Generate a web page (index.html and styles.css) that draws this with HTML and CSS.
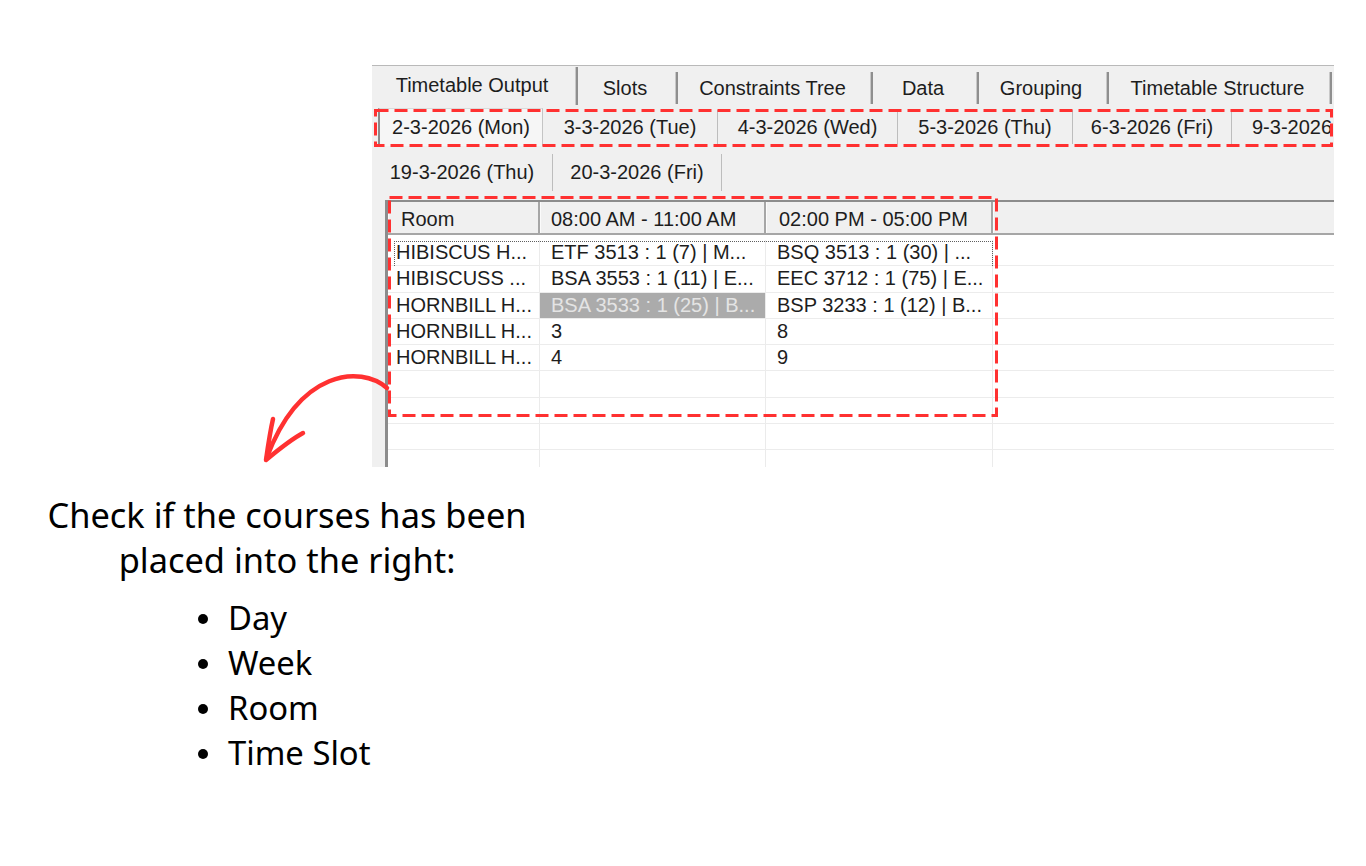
FILE: index.html
```html
<!DOCTYPE html>
<html lang="en">
<head>
<meta charset="utf-8">
<title>Timetable check</title>
<link rel="stylesheet" href="styles.css">
</head>
<body>
<div class="page">
  <div class="shot-col">
    <section class="window">
      <nav class="main-tabs">
        <div class="mtab active w-out">Timetable Output</div>
        <div class="mtab w-slots">Slots</div>
        <div class="mtab w-ctree">Constraints Tree</div>
        <div class="mtab w-data">Data</div>
        <div class="mtab w-group">Grouping</div>
        <div class="mtab w-struct">Timetable Structure</div>
      </nav>

      <div class="date-row row-a">
        <div class="dtab current w165">2-3-2026 (Mon)</div>
        <div class="dtab w175">3-3-2026 (Tue)</div>
        <div class="dtab w180">4-3-2026 (Wed)</div>
        <div class="dtab w175">5-3-2026 (Thu)</div>
        <div class="dtab w159">6-3-2026 (Fri)</div>
        <div class="dtab last">9-3-2026</div>
      </div>
      <div class="date-row row-b">
        <div class="dtab w181">19-3-2026 (Thu)</div>
        <div class="dtab w169">20-3-2026 (Fri)</div>
      </div>

      <div class="grid">
        <div class="grid-head">
          <div class="hcell">Room</div>
          <div class="hcell">08:00 AM - 11:00 AM</div>
          <div class="hcell">02:00 PM - 05:00 PM</div>
          <div class="hcell fill"></div>
        </div>
        <div class="grid-gap"></div>
        <div class="grow focus">
          <div class="cell room">HIBISCUS H...</div>
          <div class="cell">ETF 3513 : 1 (7) | M...</div>
          <div class="cell">BSQ 3513 : 1 (30) | ...</div>
          <div class="cell fill"></div>
        </div>
        <div class="grow">
          <div class="cell room">HIBISCUSS ...</div>
          <div class="cell">BSA 3553 : 1 (11) | E...</div>
          <div class="cell">EEC 3712 : 1 (75) | E...</div>
          <div class="cell fill"></div>
        </div>
        <div class="grow">
          <div class="cell room">HORNBILL H...</div>
          <div class="cell picked">BSA 3533 : 1 (25) | B...</div>
          <div class="cell">BSP 3233 : 1 (12) | B...</div>
          <div class="cell fill"></div>
        </div>
        <div class="grow">
          <div class="cell room">HORNBILL H...</div>
          <div class="cell">3</div>
          <div class="cell">8</div>
          <div class="cell fill"></div>
        </div>
        <div class="grow">
          <div class="cell room">HORNBILL H...</div>
          <div class="cell">4</div>
          <div class="cell">9</div>
          <div class="cell fill"></div>
        </div>
        <div class="grow"><div class="cell room"></div><div class="cell"></div><div class="cell"></div><div class="cell fill"></div></div>
        <div class="grow"><div class="cell room"></div><div class="cell"></div><div class="cell"></div><div class="cell fill"></div></div>
        <div class="grow"><div class="cell room"></div><div class="cell"></div><div class="cell"></div><div class="cell fill"></div></div>
        <div class="grow"><div class="cell room"></div><div class="cell"></div><div class="cell"></div><div class="cell fill"></div></div>
      </div>
    </section>
  </div>

  <section class="note">
    <p class="note-text">Check if the courses has been<br>placed into the right:</p>
    <ul class="checks">
      <li>Day</li>
      <li>Week</li>
      <li>Room</li>
      <li>Time Slot</li>
    </ul>
  </section>

  <svg class="marks" width="1366" height="866" viewBox="0 0 1366 866" aria-hidden="true">
    <g fill="none" stroke="#ff3131" stroke-width="3" stroke-dasharray="13 6">
      <rect x="375.5" y="110.5" width="956" height="35"/>
      <rect x="389.5" y="197.5" width="607" height="218"/>
    </g>
    <g fill="none" stroke="#ff3131" stroke-width="4.5" stroke-linecap="round" stroke-linejoin="round">
      <path d="M387 388 C360 365 300 370 267 457"/>
      <path d="M273 419 C270 432 268 446 266 460 C278 450 290 440 303 433"/>
    </g>
  </svg>
</div>
</body>
</html>
```

FILE: styles.css
```css
html, body {
  margin: 0;
  background: #ffffff;
}

.page {
  position: relative;
  width: 1366px;
  height: 866px;
  overflow: hidden;
}

/* ---------- application window ---------- */
.shot-col {
  padding: 65px 0 0 372px;
}

.window {
  width: 962px;
  height: 402px;
  box-sizing: border-box;
  background: #f0f0f0;
  border-top: 1px solid #b9b9b9;
  overflow: hidden;
  display: flex;
  flex-direction: column;
  font-family: "Liberation Sans", Arial, sans-serif;
  font-size: 20px;
  color: #1d1d1d;
}

/* main tab strip */
.main-tabs {
  display: flex;
  height: 39px;
  flex: none;
}

.mtab {
  position: relative;
  box-sizing: border-box;
  height: 100%;
  display: flex;
  align-items: center;
  justify-content: center;
  padding-top: 5px;
  padding-right: 6px;
  white-space: nowrap;
}

.mtab::after {
  content: "";
  position: absolute;
  right: 0;
  top: 6px;
  bottom: 1px;
  width: 2px;
  background: #8f8f8f;
  box-shadow: -1px 0 0 #c8c8c8;
}

.mtab.active {
  padding-top: 0;
  padding-bottom: 1px;
}

.mtab.active::after {
  top: 1px;
  bottom: 0;
}

.w-out { width: 206px; }
.w-slots { width: 100px; }
.w-ctree { width: 195px; }
.w-data { width: 106px; }
.w-group { width: 130px; }
.w-struct { width: 223px; }

/* date tab rows */
.date-row {
  display: flex;
  flex: none;
  white-space: nowrap;
}

.row-a {
  height: 38px;
  margin-top: 3px;
  padding-left: 6px;
}

.row-b {
  height: 42px;
  margin-top: 5px;
}

.dtab {
  flex: none;
  box-sizing: border-box;
  display: flex;
  align-items: center;
  justify-content: center;
  border-right: 1px solid #bdbdbd;
  margin: 2px 0;
  overflow: hidden;
}

.row-b .dtab {
  margin: 3px 0 2px;
}

.dtab.current {
  margin: 0;
  background: #f6f6f6;
  border-left: 2px solid #8a8a8a;
  border-top: 1px solid #dadada;
  border-right: 1px solid #c4c4c4;
  padding-bottom: 1px;
}

.dtab.last {
  flex: 1;
  justify-content: flex-start;
  padding-left: 20px;
  border-right: none;
}

.w159 { width: 159px; }
.w165 { width: 165px; }
.w169 { width: 169px; }
.w175 { width: 175px; }
.w180 { width: 180px; }
.w181 { width: 181px; }

/* data grid */
.grid {
  flex: 1;
  margin: 7px 0 0 13px;
  background: #ffffff;
  border-left: 3px solid #8c8c8c;
  border-top: 2px solid #8c8c8c;
  display: flex;
  flex-direction: column;
}

.grid-head,
.grow {
  display: grid;
  grid-template-columns: 152px 226px 227px 1fr;
  flex: none;
}

.grid-head {
  height: 31px;
  background: #f0f0f0;
  border-bottom: 2px solid #a6a6a6;
}

.hcell {
  display: flex;
  align-items: center;
  padding-left: 12px;
  padding-top: 3px;
  border-right: 2px solid #a6a6a6;
  border-left: 1px solid #fbfbfb;
  white-space: nowrap;
}

.hcell:nth-child(2) {
  padding-left: 10px;
}

.hcell.fill {
  border-right: none;
}

.grid-gap {
  height: 5px;
  flex: none;
}

.grow {
  position: relative;
  height: 26.3px;
  box-sizing: border-box;
  border-bottom: 1px solid #ececec;
}

.cell {
  display: flex;
  align-items: center;
  padding-left: 11px;
  border-right: 1px solid #ebebeb;
  white-space: nowrap;
  overflow: hidden;
}

.cell.room {
  padding-left: 8px;
}

.cell.fill {
  border-right: none;
}

.cell.picked {
  background: #ababab;
  color: #e4e4e4;
}

/* keyboard focus rectangle on the current row */
.grow.focus::after {
  content: "";
  position: absolute;
  left: 6px;
  top: 1px;
  width: 597px;
  height: 24px;
  border: 1px dotted #5f5f5f;
  border-bottom: none;
}

/* ---------- instructions ---------- */
.note {
  width: 574px;
  margin-top: 25px;
  font-family: "Noto Sans", "Open Sans", sans-serif;
  line-height: 45px;
  color: #000000;
}

.note-text {
  margin: 0;
  font-size: 34.4px;
  text-align: center;
}

.checks {
  list-style: none;
  margin: 13px 0 0;
  padding: 0 0 0 198px;
  font-size: 32.8px;
}

.checks li {
  display: flex;
  align-items: center;
  gap: 20px;
}

.checks li::before {
  content: "";
  width: 10px;
  height: 10px;
  border-radius: 50%;
  background: #000000;
  margin-top: 2px;
}

/* ---------- annotation layer ---------- */
.marks {
  position: absolute;
  left: 0;
  top: 0;
  pointer-events: none;
}
```
